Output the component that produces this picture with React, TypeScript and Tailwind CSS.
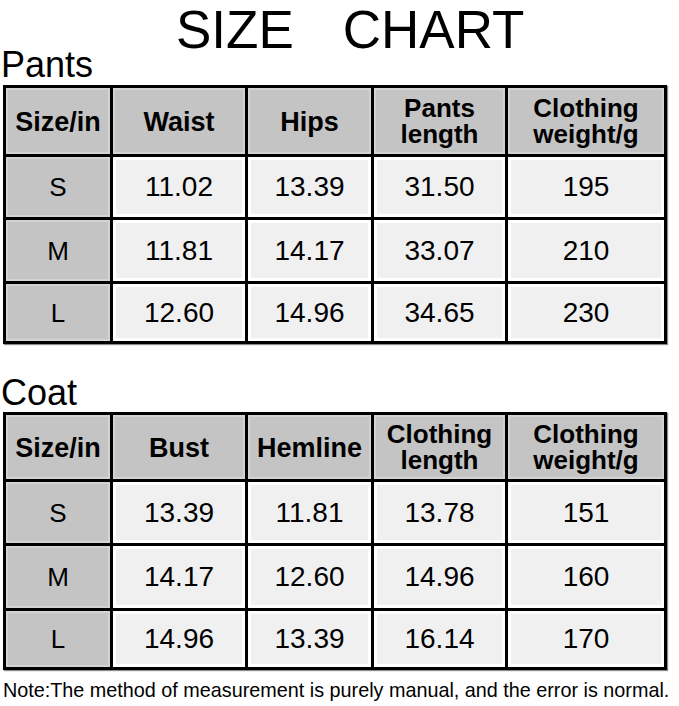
type Row = { size: string; values: string[] };

const pantsHead = ["Waist", "Hips", "Pants|length", "Clothing|weight/g"];
const pantsRows: Row[] = [
  { size: "S", values: ["11.02", "13.39", "31.50", "195"] },
  { size: "M", values: ["11.81", "14.17", "33.07", "210"] },
  { size: "L", values: ["12.60", "14.96", "34.65", "230"] },
];

const coatHead = ["Bust", "Hemline", "Clothing|length", "Clothing|weight/g"];
const coatRows: Row[] = [
  { size: "S", values: ["13.39", "11.81", "13.78", "151"] },
  { size: "M", values: ["14.17", "12.60", "14.96", "160"] },
  { size: "L", values: ["14.96", "13.39", "16.14", "170"] },
];

function HeadCell({ label }: { label: string }) {
  const lines = label.split("|");
  const twoLines = lines.length > 1;
  return (
    <div
      className={`flex flex-col items-center justify-center bg-[#c4c4c4] shadow-[inset_0_0_0_2px_#d3d3d3] font-bold text-center ${
        twoLines ? "text-[26px] leading-[26px]" : "pt-[3px] text-[27px] leading-[27px]"
      }`}
    >
      {lines.map((l) => (
        <span key={l}>{l}</span>
      ))}
    </div>
  );
}

function SizeTable({
  head,
  rows,
  rowsClass,
}: {
  head: string[];
  rows: Row[];
  rowsClass: string;
}) {
  return (
    <div
      className={`ml-[3px] grid w-[664px] grid-cols-[104px_132px_123px_131px_156px] gap-[3px] bg-black p-[3px] shadow-[1px_1px_1px_rgba(0,0,0,0.45)] ${rowsClass}`}
    >
      <HeadCell label="Size/in" />
      {head.map((h) => (
        <HeadCell key={h} label={h} />
      ))}
      {rows.map((r) => [
        <div
          key={r.size}
          className="flex items-center justify-center bg-[#c4c4c4] shadow-[inset_0_0_0_2px_#d3d3d3] text-[26px] leading-[26px]"
        >
          {r.size}
        </div>,
        ...r.values.map((v, i) => (
          <div
            key={r.size + i}
            className="flex items-center justify-center bg-[#f0f0f0] shadow-[inset_0_0_0_3px_#ffffff] text-[28px] leading-[28px]"
          >
            {v}
          </div>
        )),
      ])}
    </div>
  );
}

export default function App() {
  return (
    <div className="h-[706px] w-[679px] overflow-hidden bg-white pt-[10px] font-['Liberation_Sans',Arial,sans-serif] text-black">
      <div className="flex gap-[49px] pl-[176px] text-[53px] leading-[40px]">
        <span>SIZE</span>
        <span>CHART</span>
      </div>
      <div className="pl-[1px] text-[36px] leading-[30px]">Pants</div>
      <div className="mt-[5px]">
        <SizeTable
          head={pantsHead}
          rows={pantsRows}
          rowsClass="grid-rows-[66px_60px_61px_57px]"
        />
      </div>
      <div className="mt-[34px] pl-[1px] text-[36px] leading-[30px]">Coat</div>
      <div className="mt-[4px]">
        <SizeTable
          head={coatHead}
          rows={coatRows}
          rowsClass="grid-rows-[64px_61px_62px_56px]"
        />
      </div>
      <p className="mt-[8px] whitespace-nowrap pl-[3px] text-[19.8px] leading-[24px]">
        Note:The method of measurement is purely manual, and the error is normal.
      </p>
    </div>
  );
}
